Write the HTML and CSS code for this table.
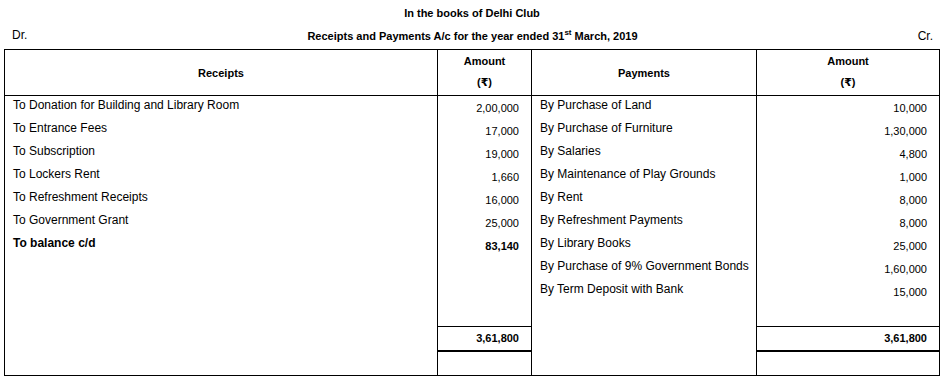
FILE: index.html
```
<!DOCTYPE html>
<html lang="en">
<head>
<meta charset="utf-8">
<title>Receipts and Payments A/c — Delhi Club</title>
<link rel="stylesheet" href="styles.css">
</head>
<body>
<div class="page">
  <div class="books">In the books of Delhi Club</div>
  <div class="heading">
    <span class="side dr">Dr.</span>
    <span class="title">Receipts and Payments A/c for the year ended 31<sup>st</sup> March, 2019</span>
    <span class="side cr">Cr.</span>
  </div>
  <div class="ledger">
    <div class="cell head head-single">Receipts</div>
    <div class="cell head head-amount"><div>Amount</div><div>(₹)</div></div>
    <div class="cell head head-single">Payments</div>
    <div class="cell head head-amount"><div>Amount</div><div>(₹)</div></div>

    <div class="cell items items-left">
      <div class="line">To Donation for Building and Library Room</div>
      <div class="line">To Entrance Fees</div>
      <div class="line">To Subscription</div>
      <div class="line">To Lockers Rent</div>
      <div class="line">To Refreshment Receipts</div>
      <div class="line">To Government Grant</div>
      <div class="line strong">To balance c/d</div>
    </div>
    <div class="cell nums">
      <div class="line">2,00,000</div>
      <div class="line">17,000</div>
      <div class="line">19,000</div>
      <div class="line">1,660</div>
      <div class="line">16,000</div>
      <div class="line">25,000</div>
      <div class="line strong">83,140</div>
    </div>
    <div class="cell items items-right">
      <div class="line">By Purchase of Land</div>
      <div class="line">By Purchase of Furniture</div>
      <div class="line">By Salaries</div>
      <div class="line">By Maintenance of Play Grounds</div>
      <div class="line">By Rent</div>
      <div class="line">By Refreshment Payments</div>
      <div class="line">By Library Books</div>
      <div class="line">By Purchase of 9% Government Bonds</div>
      <div class="line">By Term Deposit with Bank</div>
    </div>
    <div class="cell nums">
      <div class="line">10,000</div>
      <div class="line">1,30,000</div>
      <div class="line">4,800</div>
      <div class="line">1,000</div>
      <div class="line">8,000</div>
      <div class="line">8,000</div>
      <div class="line">25,000</div>
      <div class="line">1,60,000</div>
      <div class="line">15,000</div>
    </div>

    <div class="cell total total-left">3,61,800</div>
    <div class="cell total total-right">3,61,800</div>
    <div class="cell blank blank-left"></div>
    <div class="cell blank blank-right"></div>
  </div>
</div>
</body>
</html>
```
FILE: styles.css
```
* { box-sizing: border-box; }

html, body {
  margin: 0;
  padding: 0;
  background: #fff;
}

body {
  font-family: "Liberation Sans", Arial, "DejaVu Sans", sans-serif;
  color: #000;
}

.page {
  padding: 5px 0 0 4px;
  width: 940px;
}

.books {
  width: 936px;
  text-align: center;
  font-weight: bold;
  font-size: 11px;
  line-height: 17px;
  height: 17px;
}

.heading {
  width: 936px;
  margin-top: 6px;
  display: grid;
  grid-template-columns: 1fr auto 1fr;
  padding: 0 7px 0 8px;
  font-size: 11px;
  line-height: 17px;
  height: 17px;
}

.side { font-size: 12px; }
.dr { justify-self: start; position: relative; top: -1px; }
.cr { justify-self: end; }

.title {
  font-weight: bold;
  white-space: nowrap;
}

.title sup {
  font-size: 8px;
  line-height: 0;
  vertical-align: 5px;
}

.ledger {
  margin-top: 4px;
  width: 936px;
  display: grid;
  grid-template-columns: 432px 93px 224px 182px;
  grid-template-rows: 45px 230px 23px 24px;
  gap: 1px;
  padding: 1px;
  background: #000;
}

.cell {
  background: #fff;
}

.head {
  font-weight: bold;
  font-size: 11px;
  text-align: center;
}

.head-single {
  display: flex;
  align-items: center;
  justify-content: center;
}

.head-amount {
  display: flex;
  flex-direction: column;
  gap: 4px;
  padding-top: 3px;
  line-height: 17px;
}

.items {
  grid-row: 2 / span 3;
  font-size: 12px;
  padding: 1px 0 0 8px;
  display: flex;
  flex-direction: column;
  gap: 7px;
}

.items .line {
  line-height: 16px;
  white-space: nowrap;
}

.items-left { grid-column: 1; }
.items-right { grid-column: 3; }

.nums {
  font-size: 11px;
  text-align: right;
  padding: 4px 12px 0 0;
  display: flex;
  flex-direction: column;
  gap: 7px;
}

.nums .line { line-height: 16px; }

.strong { font-weight: bold; }

.total {
  font-size: 11px;
  font-weight: bold;
  text-align: right;
  padding-right: 12px;
  line-height: 23px;
}

.total-left, .blank-left { grid-column: 2; }
.total-right, .blank-right { grid-column: 4; }

.blank {
  border-top: 1px solid #000;
}
```
